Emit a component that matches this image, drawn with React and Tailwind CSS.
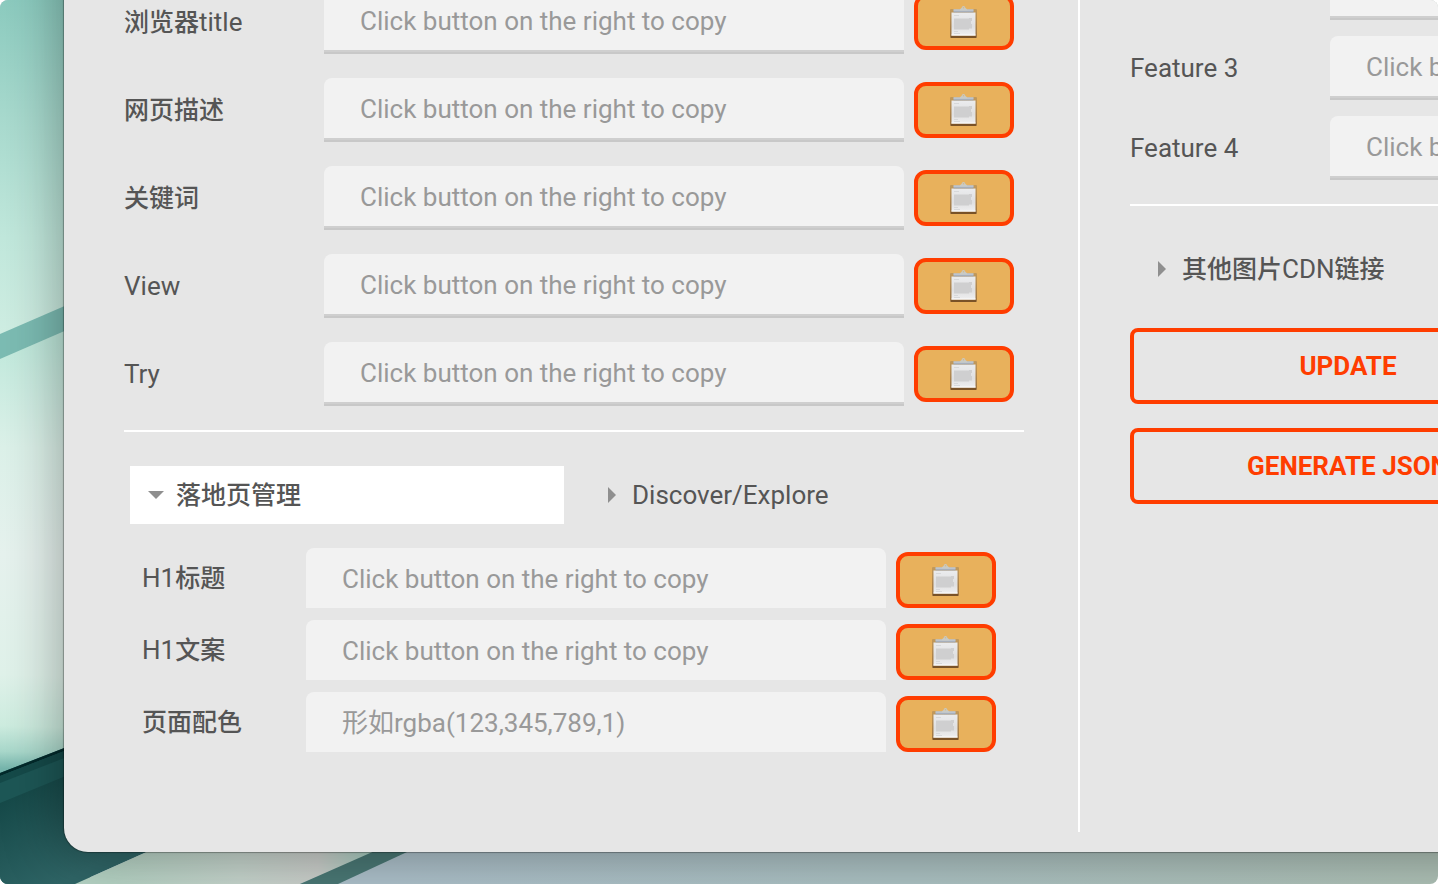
const HINT = "Click button on the right to copy";

function Wallpaper() {
  return (
    <svg
      className="absolute inset-0 h-full w-full"
      viewBox="0 0 1438 884"
      preserveAspectRatio="none"
      aria-hidden="true"
    >
      <defs>
        <linearGradient id="sky" x1="0" y1="0" x2="0" y2="340" gradientUnits="userSpaceOnUse">
          <stop offset="0" stopColor="#8ccbbf" />
          <stop offset="0.35" stopColor="#a8dace" />
          <stop offset="0.7" stopColor="#c1e8dc" />
          <stop offset="1" stopColor="#d0eee3" />
        </linearGradient>
        <linearGradient id="pane" x1="0" y1="340" x2="-12" y2="768" gradientUnits="userSpaceOnUse">
          <stop offset="0" stopColor="#c0e9dc" />
          <stop offset="0.25" stopColor="#dcf1e9" />
          <stop offset="0.5" stopColor="#e6f2ee" />
          <stop offset="0.78" stopColor="#e0f2ea" />
          <stop offset="0.9" stopColor="#cdecdf" />
          <stop offset="0.96" stopColor="#a9d8cb" />
          <stop offset="1" stopColor="#76b5ac" />
        </linearGradient>
        <linearGradient id="deep" x1="0" y1="780" x2="60" y2="884" gradientUnits="userSpaceOnUse">
          <stop offset="0" stopColor="#114443" />
          <stop offset="1" stopColor="#2f6566" />
        </linearGradient>
        <linearGradient id="floor" x1="110" y1="0" x2="370" y2="0" gradientUnits="userSpaceOnUse">
          <stop offset="0" stopColor="#b5d3c4" />
          <stop offset="0.5" stopColor="#c6d5cd" />
          <stop offset="0.8" stopColor="#cbcfcb" />
          <stop offset="1" stopColor="#a9cfc2" />
        </linearGradient>
        <linearGradient id="haze" x1="380" y1="0" x2="1438" y2="0" gradientUnits="userSpaceOnUse">
          <stop offset="0" stopColor="#adc1cb" />
          <stop offset="0.5" stopColor="#acc2c3" />
          <stop offset="1" stopColor="#aec1b6" />
        </linearGradient>
      </defs>
      <rect width="1438" height="884" fill="url(#haze)" />
      <path d="M0 0H90V884H0Z" fill="url(#sky)" />
      <path d="M0 359L90 320V780H0Z" fill="url(#pane)" />
      <path d="M0 334L90 295V320L0 359Z" fill="#7cbcb3" />
      <path d="M0 773L90 738V884H0Z" fill="#1d5756" />
      <path d="M0 773L90 738V741L0 776Z" fill="#032a2b" />
      <path d="M0 776L90 741V748L0 783Z" fill="#154a49" />
      <path d="M0 803L90 766L160 846L75 884H0Z" fill="url(#deep)" />
      <path d="M75 884L160 846H390L300 884Z" fill="url(#floor)" />
      <path d="M300 884L386 846H420L338 884Z" fill="#4a7875" />
    </svg>
  );
}

function ClipboardIcon() {
  return (
    <svg className="h-8 w-7" viewBox="0 0 28 32" aria-hidden="true">
      <defs>
        <linearGradient id="sheet" x1="0" y1="0" x2="0" y2="1">
          <stop offset="0" stopColor="#ebecee" />
          <stop offset="0.6" stopColor="#dfdfe0" />
          <stop offset="1" stopColor="#efeff0" />
        </linearGradient>
        <linearGradient id="board" x1="0" y1="0" x2="0" y2="1">
          <stop offset="0" stopColor="#c39a5b" />
          <stop offset="1" stopColor="#9c7340" />
        </linearGradient>
      </defs>
      <rect x="0" y="3" width="27" height="29" rx="1" fill="url(#board)" />
      <path d="M1 30h25v2h-25Z" fill="#7a5227" />
      <path d="M1.500 6.500h24v23h-24Z" fill="url(#sheet)" />
      <path d="M1.500 28.500h24v1h-24Z" fill="#fafafa" />
      <path d="M4 12.500h15v-0.500h3v3h-1v3h1v4.500h-3v1h-15Z" fill="#cfcfd0" />
      <path d="M4 9.500h5M4 25.500h4M4 27.500h6" stroke="#d2d3d5" strokeWidth="0.800" />
      <path d="M3.500 3.500h20v3h-20Z" fill="#a7afbb" />
      <path d="M3.500 3.500h20v1h-20Z" fill="#d3d8df" />
      <path d="M9.500 4.500Q10 2.500 11.500 2Q12 0 13.500 0T15.500 2Q17 2.500 17.500 4.500Z" fill="#c8cac6" />
      <circle cx="13.500" cy="1.800" r="0.800" fill="#d7b982" />
    </svg>
  );
}

function CopyButton({ label }) {
  return (
    <button
      type="button"
      aria-label={`Copy ${label}`}
      className="flex h-14 w-[100px] shrink-0 items-center justify-center rounded-xl border-4 border-[#ff3d00] bg-[#e8b15c]"
    >
      <ClipboardIcon />
    </button>
  );
}

function MixedText({ children }) {
  return (
    <span>
      {children.split(/([\u4e00-\u9fff]+)/).filter(Boolean).map((part, index) =>
        /[\u4e00-\u9fff]/.test(part) ? (
          <span key={index} className="text-[25px] font-medium">
            {part}
          </span>
        ) : (
          part
        )
      )}
    </span>
  );
}

function TextInput({ id, label, placeholder = HINT, underlined = true }) {
  return (
    <div
      className={
        underlined
          ? "w-[580px] shrink-0 border-b-2 border-[#c8c8c8]"
          : "w-[580px] shrink-0 pb-1"
      }
    >
      <input
        id={id}
        type="text"
        aria-label={label}
        placeholder={placeholder}
        className={
          underlined
            ? "block h-[62px] w-full rounded-t-lg border-b-2 border-[#cfcfcf] bg-[#f2f2f2] px-9 pt-0.5 text-[26px] text-[#555] placeholder:text-[#999] focus:outline-none"
            : "block h-[60px] w-full rounded-t-lg bg-[#f2f2f2] px-9 pt-0.5 text-[26px] text-[#555] placeholder:text-[#999] focus:outline-none"
        }
      />
    </div>
  );
}

function Field({ id, label }) {
  return (
    <div className="flex items-center">
      <label htmlFor={id} className="w-[200px] shrink-0">
        <MixedText>{label}</MixedText>
      </label>
      <TextInput id={id} />
      <div className="ml-2.5">
        <CopyButton label={label} />
      </div>
    </div>
  );
}

function SubField({ id, label, placeholder }) {
  return (
    <div className="flex items-center">
      <label htmlFor={id} className="w-[164px] shrink-0 pb-1">
        <MixedText>{label}</MixedText>
      </label>
      <TextInput id={id} placeholder={placeholder} underlined={false} />
      <div className="ml-2.5">
        <CopyButton label={label} />
      </div>
    </div>
  );
}

function Disclosure({ label, open = false }) {
  return (
    <button
      type="button"
      aria-expanded={open}
      className={
        open
          ? "flex h-[58px] w-[434px] items-center bg-white pl-[18px] text-left"
          : "flex h-[58px] w-[434px] items-center pl-[18px] text-left"
      }
    >
      <svg className="mr-3 h-4 w-4" viewBox="0 0 16 16" fill="#8f8f8f" aria-hidden="true">
        {open ? <path d="M0 4H16L8 12Z" /> : <path d="M4 0L12 8L4 16Z" />}
      </svg>
      <MixedText>{label}</MixedText>
    </button>
  );
}

function ActionButton({ children }) {
  return (
    <button
      type="button"
      className="h-[76px] w-[436px] rounded-lg border-4 border-[#ff3d00] text-[26px] font-bold text-[#ff3d00]"
    >
      {children}
    </button>
  );
}

const pageFields = [
  { id: "page-title", label: "浏览器title" },
  { id: "page-description", label: "网页描述" },
  { id: "page-keywords", label: "关键词" },
  { id: "page-view", label: "View" },
  { id: "page-try", label: "Try" },
];

const landingFields = [
  { id: "h1-title", label: "H1标题" },
  { id: "h1-copy", label: "H1文案" },
  { id: "page-colour", label: "页面配色", placeholder: "形如rgba(123,345,789,1)" },
];

const featureFields = [
  { id: "feature-3", label: "Feature 3" },
  { id: "feature-4", label: "Feature 4" },
];

export default function App() {
  return (
    <div className="relative flow-root h-screen overflow-hidden rounded-lg bg-white font-['Roboto','Noto_Sans_CJK_SC',sans-serif] text-[26px] leading-8 text-[#555]">
      <Wallpaper />
      <main className="relative -mt-20 -mr-20 ml-16 flex h-[calc(100vh+48px)] rounded-bl-3xl bg-[#e6e6e6] pt-20 pr-20 shadow-[0_0_1px_1px_rgba(0,0,0,0.3),0_0_60px_rgba(0,0,0,0.38)]">
        <section className="ml-[60px] w-[900px] shrink-0">
          <div className="-mt-2.5 flex flex-col gap-6">
            {pageFields.map((field) => (
              <Field key={field.id} {...field} />
            ))}
          </div>
          <hr className="mt-6 border-t-2 border-white" />
          <div className="mt-[34px] flex gap-[22px] pl-1.5">
            <Disclosure label="落地页管理" open />
            <Disclosure label="Discover/Explore" />
          </div>
          <div className="mt-6 flex flex-col gap-2 pl-[18px]">
            {landingFields.map((field) => (
              <SubField key={field.id} {...field} />
            ))}
          </div>
        </section>
        <div className="mb-5 ml-[54px] w-0.5 shrink-0 bg-white" />
        <section className="ml-[50px] min-w-0 flex-1 overflow-hidden">
          <div className="-mt-11 flex flex-col gap-4">
            <div className="pl-[200px]">
              <TextInput id="feature-2" label="Feature 2" />
            </div>
            {featureFields.map((field) => (
              <Field key={field.id} {...field} />
            ))}
          </div>
          <hr className="mt-6 border-t-2 border-white" />
          <div className="mt-[34px] pl-1.5">
            <Disclosure label="其他图片CDN链接" />
          </div>
          <div className="mt-[30px] flex flex-col gap-6">
            <ActionButton>UPDATE</ActionButton>
            <ActionButton>GENERATE JSON</ActionButton>
          </div>
        </section>
      </main>
    </div>
  );
}
